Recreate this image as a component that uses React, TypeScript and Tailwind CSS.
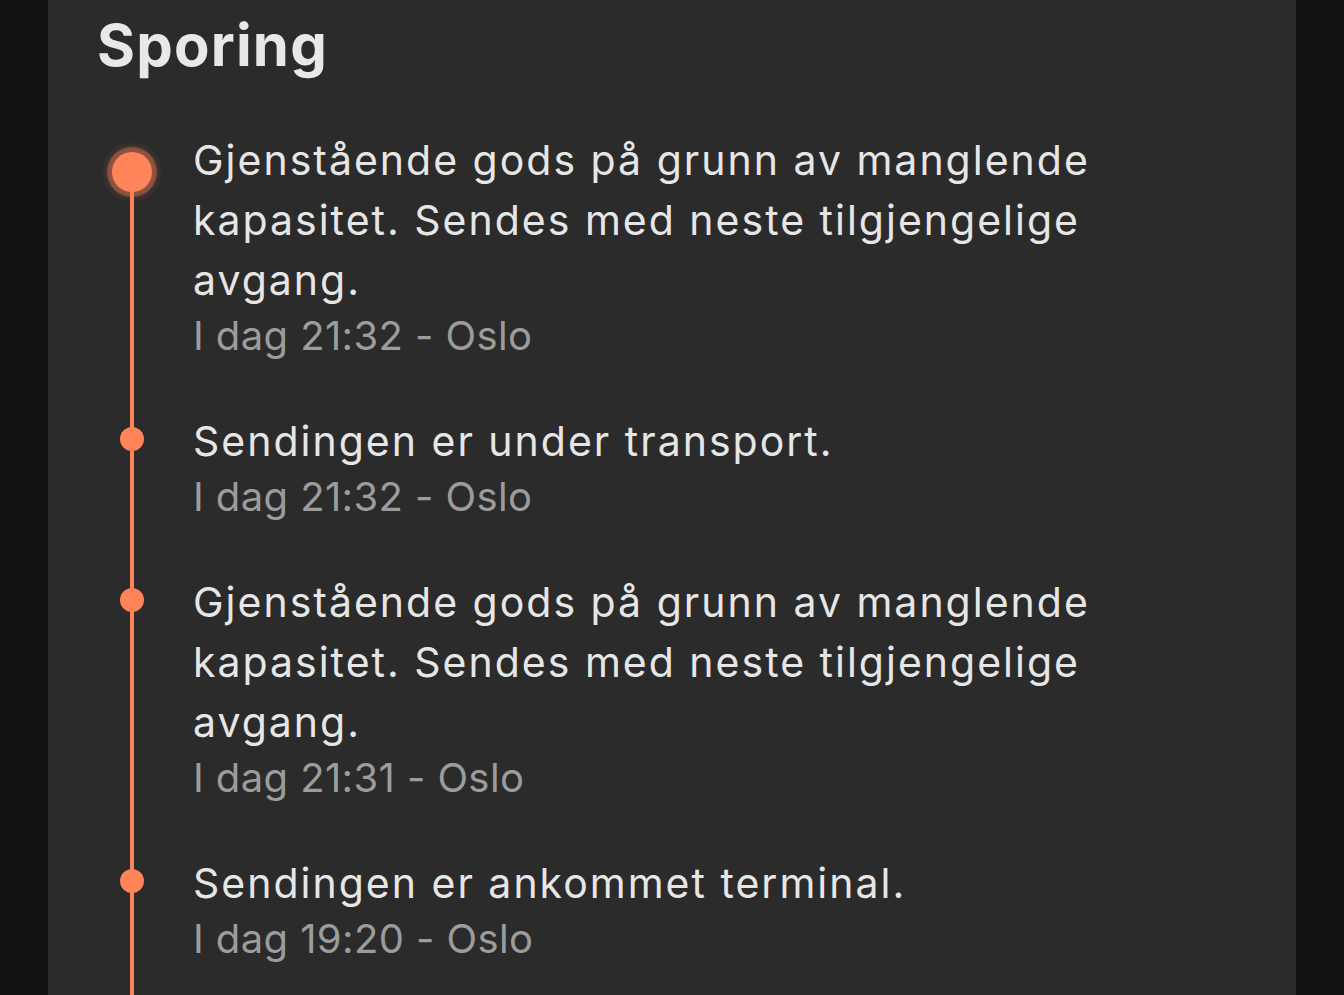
import React from "react";

const items = [
  {
    title: "Gjenstående gods på grunn av manglende kapasitet. Sendes med neste tilgjengelige avgang.",
    time: "I dag 21:32 - Oslo",
    big: true,
  },
  { title: "Sendingen er under transport.", time: "I dag 21:32 - Oslo" },
  {
    title: "Gjenstående gods på grunn av manglende kapasitet. Sendes med neste tilgjengelige avgang.",
    time: "I dag 21:31 - Oslo",
  },
  { title: "Sendingen er ankommet terminal.", time: "I dag 19:20 - Oslo" },
];

export default function App() {
  return (
    <div
      className="w-[1344px] h-[995px] overflow-hidden bg-[#121212] flex justify-center"
      style={{ fontFamily: "Inter, 'Noto Sans', sans-serif" }}
    >
      <div className="w-[1248px] h-full bg-[#2b2b2b] pl-[49px] pt-[10px] overflow-hidden">
        <h1 className="text-[58px] leading-[70px] font-bold text-[#e8e8e8] tracking-[1.2px]">Sporing</h1>
        <div className="relative mt-[50px] flex flex-col">
          <div className="absolute left-[33px] top-[42px] w-[4px] h-[1000px] bg-[#ff8459]" />
          {items.map((it, i) => (
            <div key={i} className="relative pl-[96px] pb-[49px]">
              {it.big ? (
                <div className="absolute left-[15px] top-[22px] w-[40px] h-[40px] rounded-full bg-[#ff8459] shadow-[0_0_0_5px_rgba(255,132,89,0.35),0_0_6px_6px_rgba(255,132,89,0.2)]" />
              ) : (
                <div className="absolute left-[23px] top-[16px] w-[24px] h-[24px] rounded-full bg-[#ff8459]" />
              )}
              <div className="text-[41px] leading-[60px] text-[#e6e6e6] tracking-[2px] max-w-[940px]">{it.title}</div>
              <div className="text-[40px] leading-[52px] text-[#9c9c9c] tracking-[0.4px]">{it.time}</div>
            </div>
          ))}
        </div>
      </div>
    </div>
  );
}
